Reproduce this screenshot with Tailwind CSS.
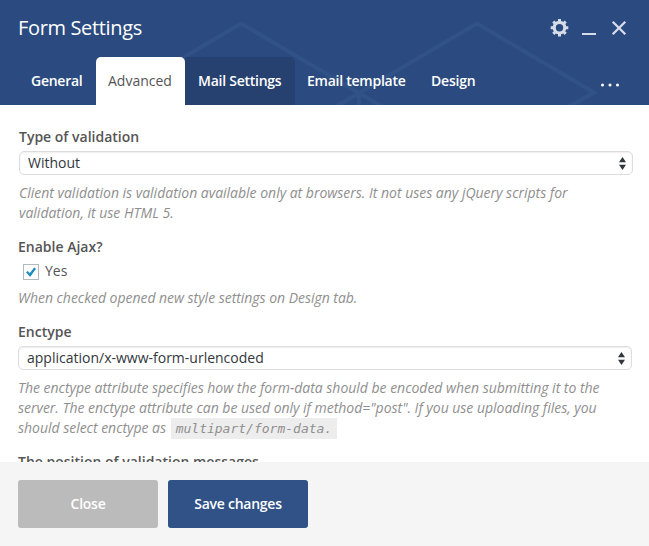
<!DOCTYPE html>
<html lang="en">
<head>
<meta charset="utf-8">
<title>Form Settings</title>
<script src="https://cdn.jsdelivr.net/npm/@tailwindcss/browser@4"></script>
</head>
<body class="w-[649px] h-[546px] overflow-hidden bg-white font-['Open_Sans',sans-serif] text-sm text-[#555]">
<div class="flex h-[546px] flex-col">
  <header class="relative h-[105px] shrink-0 bg-[#2b4b80] text-white">
    <svg class="absolute inset-0" width="649" height="105" viewBox="0 0 649 105" fill="none" stroke="#315287" stroke-width="4">
      <path d="M123 93L241 23.500L359 93L477 23.500L594 92.500L560 112M359 93V110M359 93L325 113M359 93L393 113"/>
    </svg>
    <div class="relative flex h-[57px] items-start justify-between pl-[18px] pr-[22px]">
      <h1 class="mt-[14px] text-[20px] leading-[28px] tracking-[-0.35px]">Form Settings</h1>
      <div class="mt-[18px] flex items-center text-[#d6dde8]">
        <svg width="20" height="20" viewBox="0 0 20 20"><circle cx="9.500" cy="9.700" r="5.300" fill="none" stroke="currentColor" stroke-width="3.200"/><path d="M9.500 .900V4M9.500 15.400V18.500M.700 9.700H3.800M15.200 9.700H18.300M3.300 3.500L5.400 5.600M13.600 13.800L15.700 15.900M15.700 3.500L13.600 5.600M5.400 13.800L3.300 15.900" stroke="currentColor" stroke-width="3"/></svg>
        <svg class="ml-[12px]" width="16" height="20" viewBox="0 0 16 20" fill="currentColor"><path d="M0 15h14v2H0z"/></svg>
        <svg class="ml-[13px]" width="16" height="20" viewBox="0 0 16 20" fill="none" stroke="currentColor" stroke-width="2.300"><path d="M1.700 3.700l12.600 12.600M14.300 3.700L1.700 16.300"/></svg>
      </div>
    </div>
    <nav class="relative flex h-12 pl-[18px] font-semibold leading-[48px] whitespace-nowrap">
      <a class="w-[78px] pl-[13px] tracking-[-0.25px]">General</a>
      <a class="w-[89px] rounded-t-[5px] bg-white pl-[12px] font-normal text-[#555]">Advanced</a>
      <a class="w-[110px] rounded-tr-[5px] bg-[#264070] pl-[13px] tracking-[-0.25px]">Mail Settings</a>
      <a class="w-[124px] pl-[12px] tracking-[-0.25px]">Email template</a>
      <a class="w-[80px] pl-[12px] tracking-[-0.2px]">Design</a>
      <svg class="ml-auto mr-[28px] mt-[25px]" width="20" height="6" viewBox="0 0 20 6" fill="currentColor"><circle cx="1.500" cy="3" r="1.500"/><circle cx="9" cy="3" r="1.500"/><circle cx="16.500" cy="3" r="1.500"/></svg>
    </nav>
  </header>

  <main class="h-[357px] shrink-0 overflow-hidden pl-[18px] pr-4 pt-[22px] whitespace-nowrap">
    <section class="h-[110px] pl-px">
      <h2 class="font-semibold leading-5">Type of validation</h2>
      <div class="mt-1 flex h-6 w-[614px] items-center justify-between rounded-[5px] border border-[#ddd] pl-2 pr-[6px] text-[#32373c] shadow-[inset_0_1px_2px_rgba(0,0,0,0.07)]">
        <span class="leading-5">Without</span>
        <svg width="7" height="13" viewBox="0 0 7 13" fill="#32373c"><path d="M0 5.300L3.500 0L7 5.300zM0 7.700H7L3.500 13z"/></svg>
      </div>
      <p class="mt-2 italic leading-5 text-[#8f8f8f] tracking-[-0.01px]">Client validation is validation available only at browsers. It not uses any jQuery scripts for<br>validation, it use HTML 5.</p>
    </section>
    <section class="h-[85px]">
      <h2 class="font-semibold leading-5">Enable Ajax?</h2>
      <label class="mt-1 flex h-5 items-center pl-[5px]">
        <span class="mt-[2px] flex size-4 items-center justify-center border border-[#b4b9be] bg-white"><svg width="10" height="10" viewBox="0 0 10 10" fill="#1e8cbe"><path d="M0 5.300L1.600 4.100L3.800 6.100L8.200 .5L10 1.700L4.500 9.500H3.700z"/></svg></span>
        <span class="ml-[6px] leading-5">Yes</span>
      </label>
      <p class="mt-[7px] italic leading-5 text-[#8f8f8f] tracking-[-0.03px]">When checked opened new style settings on Design tab.</p>
    </section>
    <section class="h-[130px]">
      <h2 class="font-semibold leading-5">Enctype</h2>
      <div class="mt-1 flex h-6 w-[614px] items-center justify-between rounded-[5px] border border-[#ddd] pl-2 pr-[6px] text-[#32373c] shadow-[inset_0_1px_2px_rgba(0,0,0,0.07)]">
        <span class="leading-5">application/x-www-form-urlencoded</span>
        <svg width="7" height="13" viewBox="0 0 7 13" fill="#32373c"><path d="M0 5.300L3.500 0L7 5.300zM0 7.700H7L3.500 13z"/></svg>
      </div>
      <p class="mt-2 italic leading-5 text-[#8f8f8f] tracking-[-0.02px]">The enctype attribute specifies how the form-data should be encoded when submitting it to the<br>server. The enctype attribute can be used only if method="post". If you use uploading files, you<br>should select enctype as <code class="ml-px inline-block h-[21px] w-[166px] bg-[#ededed] pl-[5px] align-top font-['DejaVu_Sans_Mono',monospace] text-[13px] leading-[21px] tracking-normal">multipart/form-data.</code></p>
    </section>
    <h2 class="font-semibold leading-5">The position of validation messages</h2>
  </main>

  <footer class="flex grow gap-[10px] bg-[#f5f5f5] pl-[18px] pt-[18px] font-semibold text-white">
    <button class="h-12 w-[140px] rounded-[3px] bg-[#bbb] tracking-[-0.25px]">Close</button>
    <button class="h-12 w-[140px] rounded-[3px] bg-[#305287] tracking-[-0.25px]">Save changes</button>
  </footer>
</div>
</body>
</html>
